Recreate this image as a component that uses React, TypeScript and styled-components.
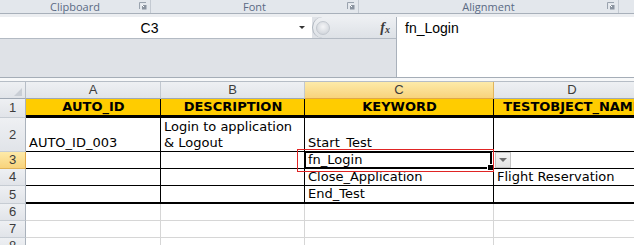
import styled, { createGlobalStyle } from "styled-components";

const GlobalStyle = createGlobalStyle`
  html, body {
    margin: 0;
    padding: 0;
    background: #ffffff;
  }
`;

type Kind = "title" | "data" | "empty";

interface SheetRow {
  label: string;
  height: number;
  kind: Kind;
  bottom: number;
  cells: string[];
}

const columns = [
  { label: "A", width: 135 },
  { label: "B", width: 144 },
  { label: "C", width: 189, active: true },
  { label: "D", width: 157 },
];

const rows: SheetRow[] = [
  { label: "1", height: 19, kind: "title", bottom: 3, cells: ["AUTO_ID", "DESCRIPTION", "KEYWORD", "TESTOBJECT_NAME"] },
  { label: "2", height: 34, kind: "data", bottom: 1, cells: ["AUTO_ID_003", "Login to application\n& Logout", "Start_Test", ""] },
  { label: "3", height: 17, kind: "data", bottom: 1, cells: ["", "", "fn_Login", ""] },
  { label: "4", height: 17, kind: "data", bottom: 1, cells: ["", "", "Close_Application", "Flight Reservation"] },
  { label: "5", height: 18, kind: "data", bottom: 2, cells: ["", "", "End_Test", ""] },
  { label: "6", height: 17, kind: "empty", bottom: 1, cells: ["", "", "", ""] },
  { label: "7", height: 17, kind: "empty", bottom: 1, cells: ["", "", "", ""] },
  { label: "8", height: 17, kind: "empty", bottom: 1, cells: ["", "", "", ""] },
];

const ribbonGroups = [
  { title: "Clipboard", width: 151 },
  { title: "Font", width: 208 },
  { title: "Alignment", width: 260 },
];

const Launcher = () => (
  <LauncherIcon width="8" height="8" viewBox="0 0 8 8">
    <path d="M0.5 7V0.5H7" fill="none" stroke="#9aa3ae" />
    <rect x="3" y="3" width="4.5" height="4.5" fill="#8a939f" />
    <path d="M2.5 2.5L5 5" stroke="#ffffff" />
  </LauncherIcon>
);

const App = () => {
  return (
    <>
      <GlobalStyle />
      <Page>
        <RibbonBar>
          {ribbonGroups.map((group) => (
            <RibbonGroup key={group.title} $width={group.width}>
              {group.title}
              <Launcher />
            </RibbonGroup>
          ))}
        </RibbonBar>
        <RibbonGap />

        <FormulaBar>
          <NamePane>
            <NameRow>
              <NameBox>
                <NameText>C3</NameText>
                <DropArrow />
              </NameBox>
              <FxPill>
                <Knob />
                <Fx>
                  f<sub>x</sub>
                </Fx>
              </FxPill>
            </NameRow>
          </NamePane>
          <FormulaInput>fn_Login</FormulaInput>
        </FormulaBar>
        <Divider />

        <Sheet>
          <Row $height={17}>
            <Corner>
              <CornerMark />
            </Corner>
            {columns.map((col) => (
              <ColHead key={col.label} $width={col.width} $active={col.active}>
                {col.label}
              </ColHead>
            ))}
          </Row>

          {rows.map((row) => (
            <Row key={row.label} $height={row.height}>
              <RowHead $active={row.label === "3"}>{row.label}</RowHead>
              {row.cells.map((text, i) => {
                const selected = row.label === "3" && i === 2;
                return (
                  <Cell
                    key={columns[i].label}
                    $width={columns[i].width}
                    $kind={row.kind}
                    $bottom={row.bottom}
                  >
                    {text}
                    {selected && (
                      <>
                        <Selection />
                        <FillHandle />
                        <ListButton>
                          <ListArrow />
                        </ListButton>
                        <Annotation />
                      </>
                    )}
                  </Cell>
                );
              })}
            </Row>
          ))}
        </Sheet>
      </Page>
    </>
  );
};

export default App;

const Page = styled.div`
  width: 634px;
  height: 245px;
  overflow: hidden;
  background: #ffffff;
`;

const RibbonBar = styled.div`
  display: flex;
  height: 13px;
  background: #e3e7ec;
  border-bottom: 1px solid #a8b0ba;
  font-family: "Open Sans", sans-serif;
  font-size: 11px;
  line-height: 13px;
  color: #5a6a84;
`;

const RibbonGroup = styled.div<{ $width: number }>`
  position: relative;
  box-sizing: border-box;
  width: ${(p) => p.$width}px;
  display: flex;
  justify-content: center;
  border-right: 1px solid #c4cad2;
`;

const LauncherIcon = styled.svg`
  position: absolute;
  right: 3px;
  top: 2px;
`;

const RibbonGap = styled.div`
  height: 3px;
  background: #eceef1;
`;

const FormulaBar = styled.div`
  display: flex;
  height: 60px;
  border-bottom: 1px solid #a5adb7;
`;

const NamePane = styled.div`
  width: 396px;
  background: #dfe2e7;
  border-right: 1px solid #a9b1bb;
`;

const NameRow = styled.div`
  display: flex;
  height: 21px;
  border-bottom: 1px solid #b3bac3;
`;

const NameBox = styled.div`
  width: 312px;
  display: flex;
  align-items: center;
  background: #ffffff;
`;

const NameText = styled.span`
  flex: 1;
  text-align: center;
  font-family: "Liberation Sans", sans-serif;
  font-size: 14px;
  color: #000000;
`;

const DropArrow = styled.span`
  width: 0;
  height: 0;
  margin-right: 7px;
  border-left: 3px solid transparent;
  border-right: 3px solid transparent;
  border-top: 3px solid #333333;
`;

const FxPill = styled.div`
  flex: 1;
  display: flex;
  align-items: center;
  justify-content: space-between;
  padding: 0 6px 0 3px;
  border-radius: 11px 0 0 11px;
  border-left: 1px solid #aeb5be;
  background: linear-gradient(#eef0f3, #dde1e6);
`;

const Knob = styled.span`
  width: 12px;
  height: 12px;
  border-radius: 50%;
  border: 1px solid #c3c8cf;
  background: radial-gradient(circle at 50% 40%, #f4f5f7, #c9ced5);
`;

const Fx = styled.span`
  font-family: "Liberation Serif", serif;
  font-style: italic;
  font-weight: bold;
  font-size: 14px;
  color: #3a3a3a;

  sub {
    font-size: 10px;
    vertical-align: -1px;
  }
`;

const FormulaInput = styled.div`
  flex: 1;
  background: #ffffff;
  padding: 3px 8px;
  font-family: "Liberation Sans", sans-serif;
  font-size: 14px;
  line-height: 16px;
  color: #000000;
`;

const Divider = styled.div`
  height: 3px;
  background: #f7f8f9;
  border-bottom: 1px solid #b6bdc6;
`;

const Sheet = styled.div`
  width: 651px;
  font-family: "DejaVu Sans", sans-serif;
  font-size: 13px;
  line-height: 16px;
  color: #000000;
`;

const headBg = "linear-gradient(#eef0f3, #e1e4e9)";
const activeBg = "linear-gradient(#fdeaa9, #f8d37c)";

const Row = styled.div<{ $height: number }>`
  display: flex;
  height: ${(p) => p.$height}px;
`;

const Corner = styled.div`
  position: relative;
  box-sizing: border-box;
  flex: 0 0 26px;
  background: ${headBg};
  border-right: 1px solid #b7bec7;
  border-bottom: 1px solid #9fa8b4;
`;

const CornerMark = styled.span`
  position: absolute;
  right: 3px;
  bottom: 2px;
  width: 0;
  height: 0;
  border-left: 8px solid transparent;
  border-bottom: 8px solid #c9ced5;
`;

const ColHead = styled.div<{ $width: number; $active?: boolean }>`
  box-sizing: border-box;
  flex: 0 0 ${(p) => p.$width}px;
  display: flex;
  align-items: center;
  justify-content: center;
  font-family: "Liberation Sans", sans-serif;
  font-size: 13px;
  color: #3c3c3c;
  background: ${(p) => (p.$active ? activeBg : headBg)};
  border-right: 1px solid ${(p) => (p.$active ? "#e1b45a" : "#c2c8d0")};
  border-bottom: 1px solid ${(p) => (p.$active ? "#e0a848" : "#9fa8b4")};
`;

const RowHead = styled.div<{ $active?: boolean }>`
  box-sizing: border-box;
  flex: 0 0 26px;
  display: flex;
  align-items: center;
  justify-content: center;
  font-family: "Liberation Sans", sans-serif;
  font-size: 13px;
  color: #3c3c3c;
  background: ${(p) => (p.$active ? activeBg : headBg)};
  border-right: 1px solid ${(p) => (p.$active ? "#e0a848" : "#aab2bc")};
  border-bottom: 1px solid ${(p) => (p.$active ? "#e1b45a" : "#c6ccd3")};
`;

const Cell = styled.div<{ $width: number; $kind: Kind; $bottom: number }>`
  position: relative;
  box-sizing: border-box;
  flex: 0 0 ${(p) => p.$width}px;
  display: flex;
  align-items: ${(p) => (p.$kind === "title" ? "center" : "flex-end")};
  justify-content: ${(p) => (p.$kind === "title" ? "center" : "flex-start")};
  padding: 0 2px 0 3px;
  white-space: pre-line;
  font-weight: ${(p) => (p.$kind === "title" ? "bold" : "normal")};
  background: ${(p) => (p.$kind === "title" ? "#ffcc00" : "#ffffff")};
  border-right: 1px solid ${(p) => (p.$kind === "empty" ? "#d6d6d6" : "#000000")};
  border-bottom: ${(p) => p.$bottom}px solid
    ${(p) => (p.$kind === "empty" ? "#d6d6d6" : "#000000")};
`;

const Selection = styled.span`
  position: absolute;
  left: -1px;
  top: -1px;
  right: 1px;
  bottom: -1px;
  border: 2px solid #000000;
`;

const FillHandle = styled.span`
  position: absolute;
  right: -1px;
  bottom: -3px;
  width: 5px;
  height: 5px;
  background: #000000;
  border: 1px solid #ffffff;
  z-index: 2;
`;

const ListButton = styled.span`
  position: absolute;
  left: 190px;
  top: 0;
  box-sizing: border-box;
  width: 16px;
  height: 16px;
  display: flex;
  align-items: center;
  justify-content: center;
  background: linear-gradient(#f4f4f4, #e2e2e2);
  border: 1px solid #c4c4c4;
  z-index: 2;
`;

const ListArrow = styled.span`
  width: 0;
  height: 0;
  border-left: 4px solid transparent;
  border-right: 4px solid transparent;
  border-top: 4px solid #6e6e6e;
`;

const Annotation = styled.span`
  position: absolute;
  left: -8px;
  top: -3px;
  right: -1px;
  bottom: -4px;
  border: 1.5px solid #e02424;
  z-index: 3;
`;
